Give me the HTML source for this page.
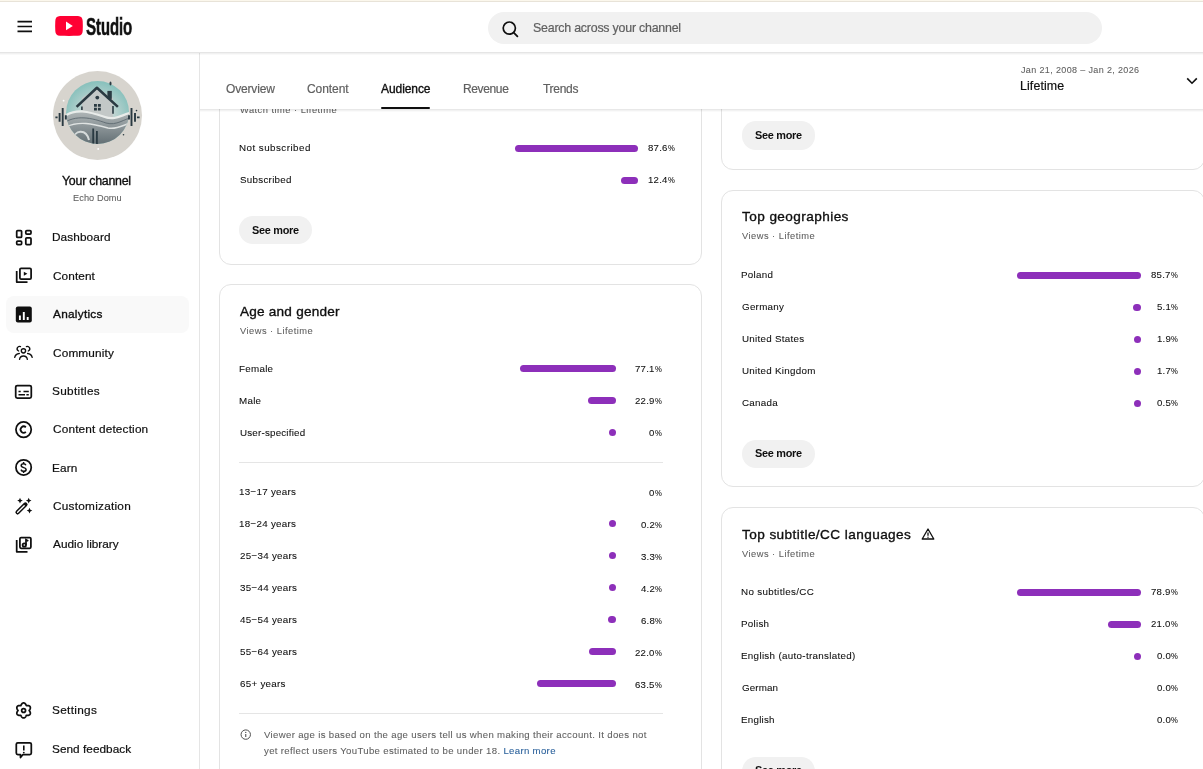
<!DOCTYPE html>
<html><head><meta charset="utf-8"><title>Channel analytics - YouTube Studio</title>
<style>
html,body{margin:0;padding:0;}
body{width:1203px;height:769px;overflow:hidden;position:relative;background:#fff;font-family:"Liberation Sans",sans-serif;}
.a{position:absolute;}
.t{position:absolute;white-space:nowrap;will-change:transform;}
.card{position:absolute;box-sizing:border-box;border:1px solid #e3e3e3;border-radius:12px;background:#fff;}
.pc{display:inline-block;transform:scaleX(.8);transform-origin:0 0;margin-right:-1.78px}
.btn{position:absolute;background:#f1f1f1;border-radius:14px;}
</style></head><body>
<div class="card" style="left:219px;top:-60px;width:483px;height:325px"></div>
<div class="card" style="left:219px;top:284px;width:483px;height:560px"></div>
<div class="card" style="left:721px;top:-60px;width:484px;height:229.5px"></div>
<div class="card" style="left:721px;top:190px;width:484px;height:296.5px"></div>
<div class="card" style="left:721px;top:507px;width:484px;height:400px"></div>
<div class="t" style="top:104.77px;font-size:9.3px;line-height:11.62px;color:#606060;-webkit-text-stroke:0.08px #606060;letter-spacing:0.48px;left:239.50px;">Watch time · Lifetime</div>
<div class="t" style="top:142.08px;font-size:9.8px;line-height:12.25px;color:#0f0f0f;-webkit-text-stroke:0.08px #0f0f0f;letter-spacing:0.462px;left:238.50px;">Not subscribed</div>
<div class="a" style="left:514.5px;top:145px;width:123.5px;height:7px;background:#8d2fba;border-radius:3.5px;"></div>
<div class="t" style="top:142.47px;font-size:9.6px;line-height:12.0px;color:#0f0f0f;-webkit-text-stroke:0.08px #0f0f0f;letter-spacing:0.25px;right:528.20px;text-align:right;">87.6<span class="pc">%</span></div>
<div class="t" style="top:174.48px;font-size:9.8px;line-height:12.25px;color:#0f0f0f;-webkit-text-stroke:0.08px #0f0f0f;letter-spacing:0.277px;left:239.50px;">Subscribed</div>
<div class="a" style="left:620.5px;top:177px;width:17.5px;height:7px;background:#8d2fba;border-radius:3.5px;"></div>
<div class="t" style="top:174.47px;font-size:9.6px;line-height:12.0px;color:#0f0f0f;-webkit-text-stroke:0.08px #0f0f0f;letter-spacing:0.25px;right:528.20px;text-align:right;">12.4<span class="pc">%</span></div>
<div class="btn" style="left:239px;top:216px;width:73px;height:28px"></div>
<div class="t" style="top:223.71px;font-size:10.9px;line-height:13.62px;color:#0f0f0f;font-weight:700;letter-spacing:-0.271px;left:252.40px;">See more</div>
<div class="t" style="top:302.59px;font-size:13.6px;line-height:17.0px;color:#0f0f0f;-webkit-text-stroke:0.35px #0f0f0f;letter-spacing:0.215px;left:240.00px;">Age and gender</div>
<div class="t" style="top:325.77px;font-size:9.3px;line-height:11.62px;color:#606060;-webkit-text-stroke:0.08px #606060;letter-spacing:0.48px;left:240.00px;">Views · Lifetime</div>
<div class="t" style="top:363.08px;font-size:9.8px;line-height:12.25px;color:#0f0f0f;-webkit-text-stroke:0.08px #0f0f0f;letter-spacing:0.277px;left:239.00px;">Female</div>
<div class="a" style="left:520px;top:365.0px;width:96px;height:7px;background:#8d2fba;border-radius:3.5px;"></div>
<div class="t" style="top:363.27px;font-size:9.6px;line-height:12.0px;color:#0f0f0f;-webkit-text-stroke:0.08px #0f0f0f;letter-spacing:0.25px;right:540.90px;text-align:right;">77.1<span class="pc">%</span></div>
<div class="t" style="top:395.08px;font-size:9.8px;line-height:12.25px;color:#0f0f0f;-webkit-text-stroke:0.08px #0f0f0f;letter-spacing:0.277px;left:239.00px;">Male</div>
<div class="a" style="left:588px;top:397.0px;width:28px;height:7px;background:#8d2fba;border-radius:3.5px;"></div>
<div class="t" style="top:395.27px;font-size:9.6px;line-height:12.0px;color:#0f0f0f;-webkit-text-stroke:0.08px #0f0f0f;letter-spacing:0.25px;right:540.90px;text-align:right;">22.9<span class="pc">%</span></div>
<div class="t" style="top:427.08px;font-size:9.8px;line-height:12.25px;color:#0f0f0f;-webkit-text-stroke:0.08px #0f0f0f;letter-spacing:0.192px;left:240.00px;">User-specified</div>
<div class="a" style="left:609px;top:429.0px;width:7px;height:7px;background:#8d2fba;border-radius:3.5px;"></div>
<div class="t" style="top:427.27px;font-size:9.6px;line-height:12.0px;color:#0f0f0f;-webkit-text-stroke:0.08px #0f0f0f;letter-spacing:0.25px;right:540.99px;text-align:right;">0<span class="pc">%</span></div>
<div class="a" style="left:239px;top:462px;width:424px;height:1px;background:#e5e5e5;border-radius:0px;"></div>
<div class="t" style="top:486.48px;font-size:9.8px;line-height:12.25px;color:#0f0f0f;-webkit-text-stroke:0.08px #0f0f0f;letter-spacing:0.277px;left:239.00px;">13−17 years</div>
<div class="t" style="top:486.67px;font-size:9.6px;line-height:12.0px;color:#0f0f0f;-webkit-text-stroke:0.08px #0f0f0f;letter-spacing:0.25px;right:540.99px;text-align:right;">0<span class="pc">%</span></div>
<div class="t" style="top:518.48px;font-size:9.8px;line-height:12.25px;color:#0f0f0f;-webkit-text-stroke:0.08px #0f0f0f;letter-spacing:0.277px;left:239.00px;">18−24 years</div>
<div class="a" style="left:609px;top:520.4000000000001px;width:7px;height:7px;background:#8d2fba;border-radius:3.5px;"></div>
<div class="t" style="top:518.67px;font-size:9.6px;line-height:12.0px;color:#0f0f0f;-webkit-text-stroke:0.08px #0f0f0f;letter-spacing:0.25px;right:540.49px;text-align:right;">0.2<span class="pc">%</span></div>
<div class="t" style="top:550.48px;font-size:9.8px;line-height:12.25px;color:#0f0f0f;-webkit-text-stroke:0.08px #0f0f0f;letter-spacing:0.277px;left:240.00px;">25−34 years</div>
<div class="a" style="left:609px;top:552.4000000000001px;width:7px;height:7px;background:#8d2fba;border-radius:3.5px;"></div>
<div class="t" style="top:550.67px;font-size:9.6px;line-height:12.0px;color:#0f0f0f;-webkit-text-stroke:0.08px #0f0f0f;letter-spacing:0.25px;right:540.49px;text-align:right;">3.3<span class="pc">%</span></div>
<div class="t" style="top:582.48px;font-size:9.8px;line-height:12.25px;color:#0f0f0f;-webkit-text-stroke:0.08px #0f0f0f;letter-spacing:0.277px;left:240.00px;">35−44 years</div>
<div class="a" style="left:609px;top:584.4000000000001px;width:7px;height:7px;background:#8d2fba;border-radius:3.5px;"></div>
<div class="t" style="top:582.67px;font-size:9.6px;line-height:12.0px;color:#0f0f0f;-webkit-text-stroke:0.08px #0f0f0f;letter-spacing:0.25px;right:540.49px;text-align:right;">4.2<span class="pc">%</span></div>
<div class="t" style="top:614.48px;font-size:9.8px;line-height:12.25px;color:#0f0f0f;-webkit-text-stroke:0.08px #0f0f0f;letter-spacing:0.277px;left:240.00px;">45−54 years</div>
<div class="a" style="left:607.5px;top:616.4000000000001px;width:8.5px;height:7px;background:#8d2fba;border-radius:3.5px;"></div>
<div class="t" style="top:614.67px;font-size:9.6px;line-height:12.0px;color:#0f0f0f;-webkit-text-stroke:0.08px #0f0f0f;letter-spacing:0.25px;right:540.49px;text-align:right;">6.8<span class="pc">%</span></div>
<div class="t" style="top:646.48px;font-size:9.8px;line-height:12.25px;color:#0f0f0f;-webkit-text-stroke:0.08px #0f0f0f;letter-spacing:0.277px;left:240.00px;">55−64 years</div>
<div class="a" style="left:589px;top:648.4000000000001px;width:27px;height:7px;background:#8d2fba;border-radius:3.5px;"></div>
<div class="t" style="top:646.67px;font-size:9.6px;line-height:12.0px;color:#0f0f0f;-webkit-text-stroke:0.08px #0f0f0f;letter-spacing:0.25px;right:540.90px;text-align:right;">22.0<span class="pc">%</span></div>
<div class="t" style="top:678.48px;font-size:9.8px;line-height:12.25px;color:#0f0f0f;-webkit-text-stroke:0.08px #0f0f0f;letter-spacing:0.277px;left:240.00px;">65+ years</div>
<div class="a" style="left:537px;top:680.4000000000001px;width:79px;height:7px;background:#8d2fba;border-radius:3.5px;"></div>
<div class="t" style="top:678.67px;font-size:9.6px;line-height:12.0px;color:#0f0f0f;-webkit-text-stroke:0.08px #0f0f0f;letter-spacing:0.25px;right:540.90px;text-align:right;">63.5<span class="pc">%</span></div>
<div class="a" style="left:239px;top:713px;width:424px;height:1px;background:#e5e5e5;border-radius:0px;"></div>
<svg class="a" style="left:239px;top:727.5px" width="13" height="13" viewBox="0 0 13 13"><circle cx="6.75" cy="6.6" r="4.7" fill="none" stroke="#505050" stroke-width="1"/><path d="M6.75 5.9v3.1" stroke="#505050" stroke-width="1.1"/><circle cx="6.75" cy="4.4" r="0.65" fill="#505050"/></svg>
<div class="t" style="top:729.37px;font-size:9.6px;line-height:12.0px;color:#606060;-webkit-text-stroke:0.08px #606060;letter-spacing:0.334px;left:264.00px;">Viewer age is based on the age users tell us when making their account. It does not</div>
<div class="t" style="top:745.07px;font-size:9.6px;line-height:12.0px;color:#606060;-webkit-text-stroke:0.08px #606060;letter-spacing:0.334px;left:264.00px;">yet reflect users YouTube estimated to be under 18. <span style="color:#285f9a;-webkit-text-stroke-color:#285f9a">Learn more</span></div>
<div class="btn" style="left:742px;top:121px;width:73px;height:28.5px"></div>
<div class="t" style="top:128.71px;font-size:10.9px;line-height:13.62px;color:#0f0f0f;font-weight:700;letter-spacing:-0.271px;left:754.70px;">See more</div>
<div class="t" style="top:208.39px;font-size:13.6px;line-height:17.0px;color:#0f0f0f;-webkit-text-stroke:0.35px #0f0f0f;letter-spacing:0.421px;left:742.30px;">Top geographies</div>
<div class="t" style="top:231.37px;font-size:9.3px;line-height:11.62px;color:#606060;-webkit-text-stroke:0.08px #606060;letter-spacing:0.48px;left:742.30px;">Views · Lifetime</div>
<div class="t" style="top:269.28px;font-size:9.8px;line-height:12.25px;color:#0f0f0f;-webkit-text-stroke:0.08px #0f0f0f;letter-spacing:0.277px;left:741.30px;">Poland</div>
<div class="a" style="left:1017px;top:271.7px;width:124px;height:7px;background:#8d2fba;border-radius:3.5px;"></div>
<div class="t" style="top:269.47px;font-size:9.6px;line-height:12.0px;color:#0f0f0f;-webkit-text-stroke:0.08px #0f0f0f;letter-spacing:0.25px;right:25.50px;text-align:right;">85.7<span class="pc">%</span></div>
<div class="t" style="top:301.28px;font-size:9.8px;line-height:12.25px;color:#0f0f0f;-webkit-text-stroke:0.08px #0f0f0f;letter-spacing:0.277px;left:742.30px;">Germany</div>
<div class="a" style="left:1133px;top:303.7px;width:8px;height:7px;background:#8d2fba;border-radius:3.5px;"></div>
<div class="t" style="top:301.47px;font-size:9.6px;line-height:12.0px;color:#0f0f0f;-webkit-text-stroke:0.08px #0f0f0f;letter-spacing:0.25px;right:25.09px;text-align:right;">5.1<span class="pc">%</span></div>
<div class="t" style="top:333.28px;font-size:9.8px;line-height:12.25px;color:#0f0f0f;-webkit-text-stroke:0.08px #0f0f0f;letter-spacing:0.277px;left:742.30px;">United States</div>
<div class="a" style="left:1134px;top:335.7px;width:7px;height:7px;background:#8d2fba;border-radius:3.5px;"></div>
<div class="t" style="top:333.47px;font-size:9.6px;line-height:12.0px;color:#0f0f0f;-webkit-text-stroke:0.08px #0f0f0f;letter-spacing:0.25px;right:25.09px;text-align:right;">1.9<span class="pc">%</span></div>
<div class="t" style="top:365.28px;font-size:9.8px;line-height:12.25px;color:#0f0f0f;-webkit-text-stroke:0.08px #0f0f0f;letter-spacing:0.277px;left:742.30px;">United Kingdom</div>
<div class="a" style="left:1134px;top:367.7px;width:7px;height:7px;background:#8d2fba;border-radius:3.5px;"></div>
<div class="t" style="top:365.47px;font-size:9.6px;line-height:12.0px;color:#0f0f0f;-webkit-text-stroke:0.08px #0f0f0f;letter-spacing:0.25px;right:25.09px;text-align:right;">1.7<span class="pc">%</span></div>
<div class="t" style="top:397.28px;font-size:9.8px;line-height:12.25px;color:#0f0f0f;-webkit-text-stroke:0.08px #0f0f0f;letter-spacing:0.277px;left:742.30px;">Canada</div>
<div class="a" style="left:1134px;top:399.7px;width:7px;height:7px;background:#8d2fba;border-radius:3.5px;"></div>
<div class="t" style="top:397.47px;font-size:9.6px;line-height:12.0px;color:#0f0f0f;-webkit-text-stroke:0.08px #0f0f0f;letter-spacing:0.25px;right:25.09px;text-align:right;">0.5<span class="pc">%</span></div>
<div class="btn" style="left:742px;top:439.5px;width:73px;height:28.5px"></div>
<div class="t" style="top:447.21px;font-size:10.9px;line-height:13.62px;color:#0f0f0f;font-weight:700;letter-spacing:-0.271px;left:754.70px;">See more</div>
<div class="t" style="top:525.69px;font-size:13.6px;line-height:17.0px;color:#0f0f0f;-webkit-text-stroke:0.35px #0f0f0f;letter-spacing:0.425px;left:742.30px;">Top subtitle/CC languages</div>
<svg class="a" style="left:921px;top:527px" width="14" height="14" viewBox="0 0 14 14"><path d="M7 2 L12.8 12 H1.2 Z" fill="none" stroke="#0f0f0f" stroke-width="1.3" stroke-linejoin="round"/><path d="M7 5.6v3.2" stroke="#0f0f0f" stroke-width="1.3"/><circle cx="7" cy="10.3" r="0.7" fill="#0f0f0f"/></svg>
<div class="t" style="top:548.67px;font-size:9.3px;line-height:11.62px;color:#606060;-webkit-text-stroke:0.08px #606060;letter-spacing:0.48px;left:742.30px;">Views · Lifetime</div>
<div class="t" style="top:586.28px;font-size:9.8px;line-height:12.25px;color:#0f0f0f;-webkit-text-stroke:0.08px #0f0f0f;letter-spacing:0.336px;left:741.30px;">No subtitles/CC</div>
<div class="a" style="left:1017px;top:588.7px;width:124px;height:7px;background:#8d2fba;border-radius:3.5px;"></div>
<div class="t" style="top:586.47px;font-size:9.6px;line-height:12.0px;color:#0f0f0f;-webkit-text-stroke:0.08px #0f0f0f;letter-spacing:0.25px;right:25.50px;text-align:right;">78.9<span class="pc">%</span></div>
<div class="t" style="top:618.28px;font-size:9.8px;line-height:12.25px;color:#0f0f0f;-webkit-text-stroke:0.08px #0f0f0f;letter-spacing:0.277px;left:741.30px;">Polish</div>
<div class="a" style="left:1107.5px;top:620.7px;width:33.5px;height:7px;background:#8d2fba;border-radius:3.5px;"></div>
<div class="t" style="top:618.47px;font-size:9.6px;line-height:12.0px;color:#0f0f0f;-webkit-text-stroke:0.08px #0f0f0f;letter-spacing:0.25px;right:25.50px;text-align:right;">21.0<span class="pc">%</span></div>
<div class="t" style="top:650.28px;font-size:9.8px;line-height:12.25px;color:#0f0f0f;-webkit-text-stroke:0.08px #0f0f0f;letter-spacing:0.317px;left:741.30px;">English (auto-translated)</div>
<div class="a" style="left:1133.7px;top:652.7px;width:7.3px;height:7px;background:#8d2fba;border-radius:3.5px;"></div>
<div class="t" style="top:650.47px;font-size:9.6px;line-height:12.0px;color:#0f0f0f;-webkit-text-stroke:0.08px #0f0f0f;letter-spacing:0.25px;right:25.09px;text-align:right;">0.0<span class="pc">%</span></div>
<div class="t" style="top:682.28px;font-size:9.8px;line-height:12.25px;color:#0f0f0f;-webkit-text-stroke:0.08px #0f0f0f;letter-spacing:0.12px;left:742.30px;">German</div>
<div class="t" style="top:682.47px;font-size:9.6px;line-height:12.0px;color:#0f0f0f;-webkit-text-stroke:0.08px #0f0f0f;letter-spacing:0.25px;right:25.09px;text-align:right;">0.0<span class="pc">%</span></div>
<div class="t" style="top:714.28px;font-size:9.8px;line-height:12.25px;color:#0f0f0f;-webkit-text-stroke:0.08px #0f0f0f;letter-spacing:0.233px;left:741.30px;">English</div>
<div class="t" style="top:714.47px;font-size:9.6px;line-height:12.0px;color:#0f0f0f;-webkit-text-stroke:0.08px #0f0f0f;letter-spacing:0.25px;right:25.09px;text-align:right;">0.0<span class="pc">%</span></div>
<div class="btn" style="left:742px;top:756.5px;width:73px;height:28.5px"></div>
<div class="t" style="top:764.21px;font-size:10.9px;line-height:13.62px;color:#0f0f0f;font-weight:700;letter-spacing:-0.271px;left:754.70px;">See more</div>
<div class="a" style="left:200px;top:52px;width:1003px;height:57px;background:#fff"></div>
<div class="a" style="left:200px;top:109px;width:1003px;height:1px;background:rgba(0,0,0,0.09);border-radius:0px;"></div>
<div class="a" style="left:200px;top:110px;width:1003px;height:1px;background:rgba(0,0,0,0.05);border-radius:0px;"></div>
<div class="a" style="left:200px;top:111px;width:1003px;height:1px;background:rgba(0,0,0,0.02);border-radius:0px;"></div>
<div class="t" style="top:81.54px;font-size:12px;line-height:15.0px;color:#606060;-webkit-text-stroke:0.2px #606060;letter-spacing:-0.171px;left:225.80px;">Overview</div>
<div class="t" style="top:81.54px;font-size:12px;line-height:15.0px;color:#606060;-webkit-text-stroke:0.2px #606060;letter-spacing:-0.067px;left:307.20px;">Content</div>
<div class="t" style="top:81.94px;font-size:12px;line-height:15.0px;color:#0f0f0f;-webkit-text-stroke:0.35px #0f0f0f;letter-spacing:-0.071px;left:381.40px;">Audience</div>
<div class="t" style="top:81.94px;font-size:12px;line-height:15.0px;color:#606060;-webkit-text-stroke:0.2px #606060;letter-spacing:-0.367px;left:463.10px;">Revenue</div>
<div class="t" style="top:81.94px;font-size:12px;line-height:15.0px;color:#606060;-webkit-text-stroke:0.2px #606060;letter-spacing:-0.3px;left:542.90px;">Trends</div>
<div class="a" style="left:381.2px;top:107px;width:48.7px;height:2.2px;background:#0f0f0f;border-radius:1px;"></div>
<div class="t" style="top:64.76px;font-size:9px;line-height:11.25px;color:#606060;-webkit-text-stroke:0.08px #606060;letter-spacing:0.36px;left:1020.90px;">Jan 21, 2008 – Jan 2, 2026</div>
<div class="t" style="top:78.75px;font-size:12.4px;line-height:15.5px;color:#0f0f0f;-webkit-text-stroke:0.2px #0f0f0f;letter-spacing:0.114px;left:1020.00px;">Lifetime</div>
<svg class="a" style="left:1184.5px;top:74.7px" width="14" height="12" viewBox="0 0 14 12"><path d="M2.2 3.4 L7 8.2 L11.8 3.4" fill="none" stroke="#0f0f0f" stroke-width="1.6"/></svg>
<div class="a" style="left:0px;top:53px;width:199px;height:716px;background:#fff;border-radius:0px;"></div>
<div class="a" style="left:199px;top:53px;width:1px;height:716px;background:#e5e5e5;border-radius:0px;"></div>
<svg class="a" style="left:50px;top:68px" width="95" height="95" viewBox="0 0 95 95">
<defs>
<radialGradient id="sky" cx="0.5" cy="0.55" r="0.6"><stop offset="0" stop-color="#d9dedd"/><stop offset="0.45" stop-color="#bcd3d0"/><stop offset="1" stop-color="#7dbdb8"/></radialGradient>
<linearGradient id="gnd" x1="0" y1="0" x2="0" y2="1"><stop offset="0" stop-color="#aeb5b6"/><stop offset="1" stop-color="#435158"/></linearGradient>
<clipPath id="ic"><circle cx="47.6" cy="44.5" r="31.5"/></clipPath></defs>
<circle cx="47.5" cy="47.5" r="44.5" fill="#d7d4ce"/>
<circle cx="47.6" cy="44.5" r="31.5" fill="url(#sky)"/>
<g clip-path="url(#ic)">
<path d="M32 30 L47 20 L63 30 V50 H32 Z" fill="#c3c8c7"/>
<path d="M10 52 C25 40 40 44 55 50 C65 54 72 46 85 44 V90 H10 Z" fill="url(#gnd)"/>
<path d="M12 50 C25 39 40 44 55 49 C66 53 72 46 84 44" fill="none" stroke="#e9ecea" stroke-width="2.2"/>
<path d="M12 56 C26 46 42 50 56 55 C67 58 73 51 84 49" fill="none" stroke="#5d6a70" stroke-width="0.9"/>
<path d="M14 60 C28 52 44 56 58 60 C68 62 74 56 84 54" fill="none" stroke="#dfe3e2" stroke-width="1.4"/>
<path d="M23 72 C24 62 36 60 39 72" fill="none" stroke="#d5dada" stroke-width="2"/>
<path d="M43.2 60.5 V76 M46.9 63 V76" stroke="#2a3a42" stroke-width="1.8"/>
</g>
<path d="M26.6 38.9 L46.9 19.8 L67.9 38.9" fill="none" stroke="#2a3a42" stroke-width="2.6" stroke-linejoin="round"/>
<rect x="57.4" y="22.9" width="4.4" height="8" fill="#2a3a42"/>
<ellipse cx="60.5" cy="15.4" rx="1" ry="2" fill="#2a3a42"/>
<path d="M31.9 38.5 V42 M63 38 V45.7" stroke="#2a3a42" stroke-width="1.6"/>
<circle cx="47.3" cy="29.6" r="1.9" fill="#2a3a42"/>
<path d="M44 35.9 h2.9 v2.9 h-2.9z M47.9 35.9 h2.9 v2.9 h-2.9z M44 39.7 h2.9 v2.9 h-2.9z M47.9 39.7 h2.9 v2.9 h-2.9z" fill="#2a3a42"/>
<path d="M5.4 49.4 h2.2 M9.6 45 v8.7 M12.7 40.1 v17.9 M15.8 47.2 v4.4" stroke="#2a3a42" stroke-width="1.9"/>
<path d="M89.6 49.4 h-2.6 M85 45 v8.7 M81.5 40.1 v17.9 M79 47.2 v4.4" stroke="#2a3a42" stroke-width="1.9"/>
<circle cx="13.6" cy="32.7" r="0.9" fill="#fff"/>
<circle cx="48.2" cy="80.9" r="0.9" fill="#fff"/>
<circle cx="73.5" cy="66.7" r="0.8" fill="#2a3a42"/>
<circle cx="86.5" cy="42.6" r="0.8" fill="#2a3a42"/>
</svg>
<div class="t" style="top:173.75px;font-size:12.4px;line-height:15.5px;color:#0f0f0f;-webkit-text-stroke:0.35px #0f0f0f;letter-spacing:-0.255px;left:62.10px;">Your channel</div>
<div class="t" style="top:193.46px;font-size:9.2px;line-height:11.5px;color:#606060;-webkit-text-stroke:0.08px #606060;letter-spacing:0.088px;left:72.70px;">Echo Domu</div>
<div class="a" style="left:6px;top:296px;width:183px;height:37px;background:#f9f9f9;border-radius:8px;"></div>
<div class="t" style="top:230.34px;font-size:11.8px;line-height:14.75px;color:#0f0f0f;-webkit-text-stroke:0.2px #0f0f0f;letter-spacing:0.1px;left:51.80px;">Dashboard</div>
<div class="t" style="top:269.24px;font-size:11.8px;line-height:14.75px;color:#0f0f0f;-webkit-text-stroke:0.2px #0f0f0f;letter-spacing:0.083px;left:52.80px;">Content</div>
<div class="t" style="top:307.14px;font-size:11.8px;line-height:14.75px;color:#0f0f0f;-webkit-text-stroke:0.35px #0f0f0f;letter-spacing:0.275px;left:52.80px;">Analytics</div>
<div class="t" style="top:345.94px;font-size:11.8px;line-height:14.75px;color:#0f0f0f;-webkit-text-stroke:0.2px #0f0f0f;letter-spacing:0.15px;left:52.80px;">Community</div>
<div class="t" style="top:384.04px;font-size:11.8px;line-height:14.75px;color:#0f0f0f;-webkit-text-stroke:0.2px #0f0f0f;letter-spacing:0.3px;left:51.80px;">Subtitles</div>
<div class="t" style="top:422.24px;font-size:11.8px;line-height:14.75px;color:#0f0f0f;-webkit-text-stroke:0.2px #0f0f0f;letter-spacing:0.169px;left:52.80px;">Content detection</div>
<div class="t" style="top:461.14px;font-size:11.8px;line-height:14.75px;color:#0f0f0f;-webkit-text-stroke:0.2px #0f0f0f;letter-spacing:0.1px;left:51.80px;">Earn</div>
<div class="t" style="top:499.04px;font-size:11.8px;line-height:14.75px;color:#0f0f0f;-webkit-text-stroke:0.2px #0f0f0f;letter-spacing:0.25px;left:52.80px;">Customization</div>
<div class="t" style="top:536.94px;font-size:11.8px;line-height:14.75px;color:#0f0f0f;-webkit-text-stroke:0.2px #0f0f0f;letter-spacing:0.008px;left:52.80px;">Audio library</div>
<div class="t" style="top:703.34px;font-size:11.8px;line-height:14.75px;color:#0f0f0f;-webkit-text-stroke:0.2px #0f0f0f;letter-spacing:0.314px;left:51.80px;">Settings</div>
<div class="t" style="top:742.14px;font-size:11.8px;line-height:14.75px;color:#0f0f0f;-webkit-text-stroke:0.2px #0f0f0f;letter-spacing:0.033px;left:51.80px;">Send feedback</div>
<svg class="a" style="left:0;top:0" width="199" height="769" viewBox="0 0 199 769">
<g fill="none" stroke="#0f0f0f" stroke-width="1.75" stroke-linejoin="round">
<rect x="16.7" y="230.5" width="4.9" height="6.9" rx="1"/>
<rect x="25.8" y="230.5" width="5.2" height="3.6" rx="1"/>
<rect x="16.7" y="241" width="4.9" height="3.5" rx="1"/>
<rect x="25.8" y="237.8" width="5.2" height="6.7" rx="1"/>
<rect x="19.9" y="268.3" width="11.2" height="10.8" rx="1.2"/>
<path d="M16.7 271 V282.1 H27.5"/>
</g>
<path d="M23.8 271.8 L27.4 273.8 L23.8 275.8 Z" fill="#0f0f0f"/>
<rect x="15.8" y="306.5" width="16" height="16" rx="2" fill="#0f0f0f"/>
<path d="M19.9 320 v-4.5 M23.8 320 v-8 M27.7 320 v-3" stroke="#fff" stroke-width="1.9"/>
<g fill="none" stroke="#0f0f0f" stroke-width="1.35" stroke-linecap="round">
<circle cx="23.45" cy="350.85" r="2.15"/>
<path d="M19.55 359.3 A3.95 3.95 0 0 1 27.35 359.3"/>
<path d="M20.5 346.6 A2.35 2.35 0 1 0 18.6 351"/>
<path d="M26.4 346.6 A2.35 2.35 0 1 1 28.3 351"/>
<path d="M14.7 357.4 A5.2 5.2 0 0 1 19.3 353.5"/>
<path d="M27.6 353.5 A5.2 5.2 0 0 1 32.2 357.4"/>
</g>
<rect x="15.7" y="385.5" width="15.6" height="12.5" rx="1.6" fill="none" stroke="#0f0f0f" stroke-width="1.75"/>
<path d="M18.5 391.4h2.2 M23.5 391.4h5.3 M18.5 394.8h6.5 M26.4 394.8h2.4" stroke="#0f0f0f" stroke-width="1.5"/>
<circle cx="23.6" cy="429.6" r="7.65" fill="none" stroke="#0f0f0f" stroke-width="1.75"/>
<path d="M25.86 427.26 A3.15 3.15 0 1 0 25.86 431.94" fill="none" stroke="#0f0f0f" stroke-width="1.75"/>
<circle cx="23.6" cy="467.4" r="7.65" fill="none" stroke="#0f0f0f" stroke-width="1.75"/>
<path d="M25.9 465.2 C25.5 464.3 24.7 463.7 23.6 463.7 C22.2 463.7 21.2 464.5 21.2 465.6 C21.2 468.4 26.1 466.9 26.1 469.4 C26.1 470.6 25 471.3 23.6 471.3 C22.3 471.3 21.4 470.6 21 469.6 M23.6 461.9 V463.7 M23.6 471.3 V473" fill="none" stroke="#0f0f0f" stroke-width="1.5"/>
<path d="M17.6 512.3 L25.4 504.5" stroke="#0f0f0f" stroke-width="4.4" stroke-linecap="round"/>
<path d="M17.6 512.3 L24.2 505.7" stroke="#fff" stroke-width="1.3" stroke-linecap="round"/>
<path d="M20 497.8 l0.9 1.9 1.9 0.9 -1.9 0.9 -0.9 1.9 -0.9 -1.9 -1.9 -0.9 1.9 -0.9z" fill="#0f0f0f"/>
<path d="M28.7 497.8 l0.9 1.9 1.9 0.9 -1.9 0.9 -0.9 1.9 -0.9 -1.9 -1.9 -0.9 1.9 -0.9z" fill="#0f0f0f"/>
<path d="M29.5 507.8 l0.9 1.9 1.9 0.9 -1.9 0.9 -0.9 1.9 -0.9 -1.9 -1.9 -0.9 1.9 -0.9z" fill="#0f0f0f"/>
<g fill="none" stroke="#0f0f0f" stroke-width="1.75" stroke-linejoin="round">
<rect x="19.9" y="537.5" width="11" height="10.8" rx="1.2"/>
<path d="M16.7 540 V551.8 H27.5"/>
</g>
<circle cx="24.3" cy="545" r="1.7" fill="none" stroke="#0f0f0f" stroke-width="1.75"/>
<path d="M26 545 V539.8 L28.3 541" fill="none" stroke="#0f0f0f" stroke-width="1.75"/>
<g fill="none" stroke="#0f0f0f" stroke-width="1.75" stroke-linejoin="round">
<path d="M23.60 702.95 L23.99 702.99 L24.37 703.10 L24.73 703.29 L25.07 703.54 L25.37 703.85 L25.63 704.19 L25.86 704.56 L26.05 704.94 L26.22 705.32 L26.38 705.64 L26.74 705.62 L27.14 705.57 L27.57 705.55 L28.00 705.56 L28.43 705.62 L28.85 705.72 L29.23 705.89 L29.58 706.11 L29.87 706.38 L30.10 706.70 L30.26 707.06 L30.35 707.45 L30.37 707.85 L30.32 708.27 L30.20 708.68 L30.04 709.08 L29.83 709.46 L29.59 709.82 L29.35 710.15 L29.15 710.45 L29.35 710.75 L29.59 711.08 L29.83 711.44 L30.04 711.82 L30.20 712.22 L30.32 712.63 L30.37 713.05 L30.35 713.45 L30.26 713.84 L30.10 714.20 L29.87 714.52 L29.58 714.79 L29.23 715.01 L28.85 715.18 L28.43 715.28 L28.00 715.34 L27.57 715.35 L27.14 715.33 L26.74 715.28 L26.38 715.26 L26.22 715.58 L26.05 715.96 L25.86 716.34 L25.63 716.71 L25.37 717.05 L25.07 717.36 L24.73 717.61 L24.37 717.80 L23.99 717.91 L23.60 717.95 L23.21 717.91 L22.83 717.80 L22.47 717.61 L22.13 717.36 L21.83 717.05 L21.57 716.71 L21.34 716.34 L21.15 715.96 L20.98 715.58 L20.83 715.26 L20.46 715.28 L20.06 715.33 L19.63 715.35 L19.20 715.34 L18.77 715.28 L18.35 715.18 L17.97 715.01 L17.62 714.79 L17.33 714.52 L17.10 714.20 L16.94 713.84 L16.85 713.45 L16.83 713.05 L16.88 712.63 L17.00 712.22 L17.16 711.82 L17.37 711.44 L17.61 711.08 L17.85 710.75 L18.05 710.45 L17.85 710.15 L17.61 709.82 L17.37 709.46 L17.16 709.08 L17.00 708.68 L16.88 708.27 L16.83 707.85 L16.85 707.45 L16.94 707.06 L17.10 706.70 L17.33 706.38 L17.62 706.11 L17.97 705.89 L18.35 705.72 L18.77 705.62 L19.20 705.56 L19.63 705.55 L20.06 705.57 L20.46 705.62 L20.83 705.64 L20.98 705.32 L21.15 704.94 L21.34 704.56 L21.57 704.19 L21.83 703.85 L22.13 703.54 L22.47 703.29 L22.83 703.10 L23.21 702.99 Z"/>
<circle cx="23.6" cy="710.45" r="1.95"/>
<path d="M17.8 742.8 H29.8 a1.5 1.5 0 0 1 1.5 1.5 V753 a1.5 1.5 0 0 1 -1.5 1.5 H23 L20.5 757.5 V754.5 H17.8 a1.5 1.5 0 0 1 -1.5 -1.5 V744.3 a1.5 1.5 0 0 1 1.5 -1.5 Z"/>
</g>
<path d="M23.8 745.5 V750.4" stroke="#0f0f0f" stroke-width="1.6"/>
<circle cx="23.8" cy="752.6" r="0.9" fill="#0f0f0f"/>
</svg>
<div class="a" style="left:0;top:0;width:1203px;height:52px;background:#fff"></div>
<div class="a" style="left:0px;top:52px;width:1203px;height:1px;background:rgba(0,0,0,0.1);border-radius:0px;"></div>
<div class="a" style="left:0px;top:53px;width:1203px;height:1px;background:rgba(0,0,0,0.055);border-radius:0px;"></div>
<div class="a" style="left:0px;top:54px;width:1203px;height:1px;background:rgba(0,0,0,0.025);border-radius:0px;"></div>
<div class="a" style="left:0px;top:0px;width:1203px;height:1px;background:#fbf7ec;border-radius:0px;"></div>
<div class="a" style="left:0px;top:1px;width:1203px;height:1px;background:#e8e3d8;border-radius:0px;"></div>
<svg class="a" style="left:16px;top:19px" width="18" height="15" viewBox="0 0 18 15"><path d="M1.5 2.6h14.5M1.5 7.5h14.5M1.5 12.4h14.5" stroke="#0f0f0f" stroke-width="1.6"/></svg>
<svg class="a" style="left:54px;top:15px" width="30" height="22" viewBox="0 0 30 22"><path d="M1.3 6 C1.3 3 3 1.2 6 1.1 C12 0.9 18 0.9 24 1.1 C27 1.2 28.6 3 28.7 6 C28.9 9.3 28.9 12.7 28.7 16 C28.6 19 27 20.6 24 20.8 C18 21 12 21 6 20.8 C3 20.6 1.4 19 1.3 16 C1.1 12.7 1.1 9.3 1.3 6 Z" fill="#ff0033"/><path d="M12 6.6 L18.8 10.9 L12 15.2 Z" fill="#fff"/></svg>
<div class="t" style="left:86px;top:12.4px;font-size:23px;line-height:30px;font-weight:700;color:#0f0f0f;transform:scaleX(0.66);transform-origin:0 0;letter-spacing:-0.3px;-webkit-text-stroke:0.5px #0f0f0f">Studio</div>
<div class="a" style="left:488px;top:12px;width:614px;height:32px;background:#f1f1f1;border-radius:16px;"></div>
<svg class="a" style="left:500px;top:19px" width="20" height="20" viewBox="0 0 20 20"><circle cx="9.3" cy="9.1" r="6.1" fill="none" stroke="#0f0f0f" stroke-width="1.7"/><path d="M13.7 13.6 L17.4 17.3" stroke="#0f0f0f" stroke-width="1.8" stroke-linecap="round"/></svg>
<div class="t" style="top:20.75px;font-size:12.4px;line-height:15.5px;color:#606060;-webkit-text-stroke:0.2px #606060;letter-spacing:-0.22px;left:533.00px;">Search across your channel</div>

</body></html>
